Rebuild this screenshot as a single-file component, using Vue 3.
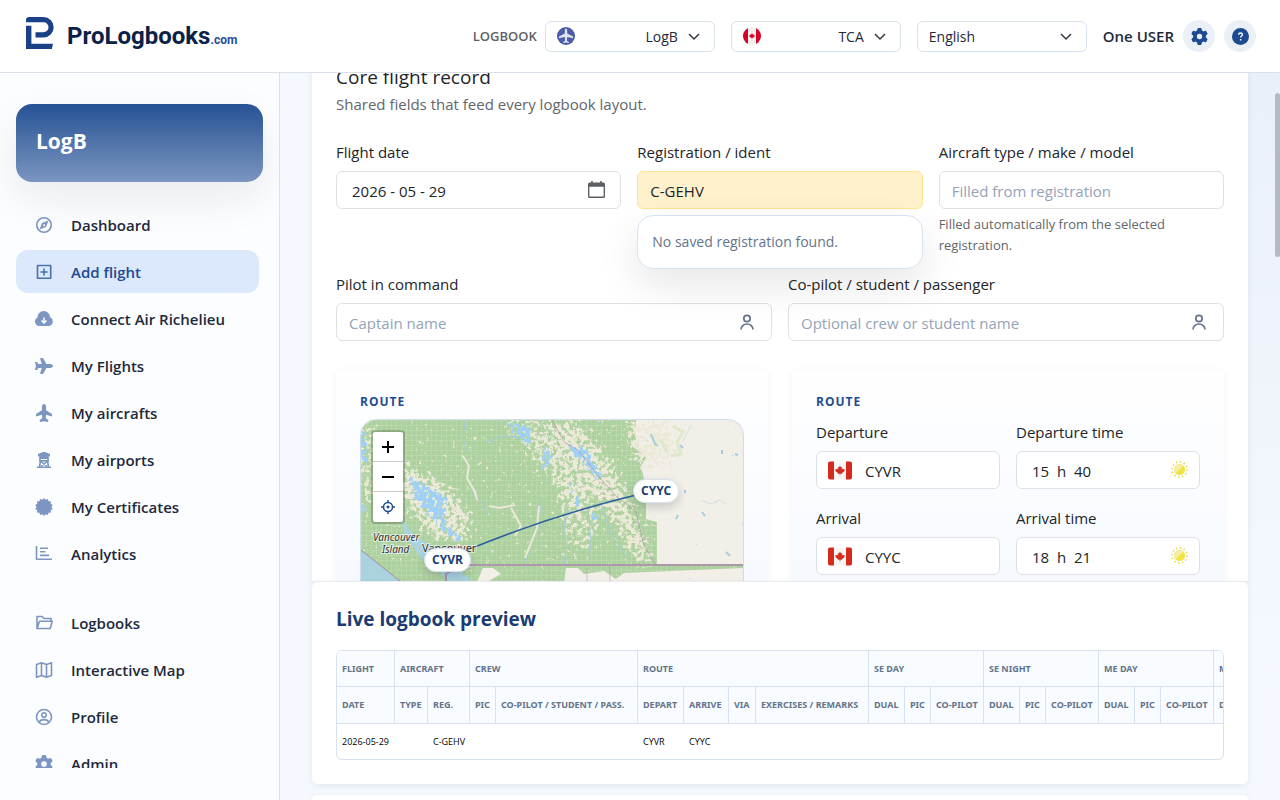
<template>
  <div class="shell">
    <header class="topbar">
      <a class="brand" href="#">
        <svg class="brand-mark" viewBox="0 0 28 33" aria-hidden="true">
          <path d="M0 3.200A3.200 3.200 0 0 1 3.200 0H17.500A10.200 10.200 0 0 1 17.500 20.400H9.500V15.200H17.500A5 5 0 0 0 17.500 5.200H0ZM0 8.800H5.400V26.800H27L25.800 32H0Z" />
        </svg>
        <span class="brand-name">ProLogbooks<small>.com</small></span>
      </a>
      <div class="top-tools">
        <div class="pick">
          <label class="pick-label" for="logbook">LOGBOOK</label>
          <div class="select-box">
            <svg class="pick-icon" viewBox="0 0 18 18" aria-hidden="true">
              <circle cx="9" cy="9" r="9" fill="#4c5ca9" />
              <path d="M9 1.500c.8 0 1.200 1.200 1.200 2.400v2.700l5.800 3v1.600l-5.800-1.100-.3 3.600 2 1.300v1L9 15.500 6.100 16v-1l2-1.300-.3-3.600L2 11.200V9.600l5.800-3V3.900c0-1.200.4-2.400 1.200-2.400Z" fill="#dfe3ee" />
            </svg>
            <select id="logbook" v-model="logbook" class="right">
              <option>LogB</option>
            </select>
            <svg class="chevron" viewBox="0 0 12 8" aria-hidden="true"><path d="M1 1l5 5 5-5" /></svg>
          </div>
        </div>
        <div class="select-box">
          <svg class="pick-icon" viewBox="0 0 18 18" aria-hidden="true">
            <defs><clipPath id="round"><circle cx="9" cy="9" r="9" /></clipPath></defs>
            <g clip-path="url(#round)">
              <path d="M0 0h18v18H0z" fill="#f0f0f0" />
              <path d="M0 0h5v18H0zM13 0h5v18h-5z" fill="#d80027" />
              <path :d="leaf" transform="translate(9 9) scale(.6)" fill="#d80027" />
            </g>
          </svg>
          <select v-model="authority" class="right" aria-label="Authority">
            <option>TCA</option>
          </select>
          <svg class="chevron" viewBox="0 0 12 8" aria-hidden="true"><path d="M1 1l5 5 5-5" /></svg>
        </div>
        <div class="select-box">
          <select v-model="language" aria-label="Language">
            <option>English</option>
            <option>Français</option>
          </select>
          <svg class="chevron" viewBox="0 0 12 8" aria-hidden="true"><path d="M1 1l5 5 5-5" /></svg>
        </div>
        <div class="user">
          <span class="user-name">One USER</span>
          <button class="round-btn" aria-label="Settings">
            <svg viewBox="0 0 512 512"><path :d="gear" /></svg>
          </button>
          <button class="round-btn" aria-label="Help">
            <svg viewBox="0 0 16 16">
              <circle cx="8" cy="8" r="8" />
              <path d="M6.200 6.400C6.300 5.300 7 4.700 8 4.700s1.800.6 1.800 1.500c0 1.300-1.700 1.300-1.700 2.700M8.100 10.400v1.400" class="mark" />
            </svg>
          </button>
        </div>
      </div>
    </header>

    <aside class="sidebar">
      <div class="book-card">LogB</div>
      <nav class="nav">
        <ul v-for="(group, g) in navGroups" :key="g">
          <li v-for="item in group" :key="item.label">
            <a href="#" class="nav-link" :class="{ active: item.label === current }" @click.prevent="current = item.label">
              <svg :viewBox="item.box || '0 0 18 18'" aria-hidden="true">
                <path v-if="item.fill" :d="item.fill" class="solid" />
                <path v-if="item.line" :d="item.line" class="line" />
                <path v-if="item.cut" :d="item.cut" class="cut" />
              </svg>
              <span>{{ item.label }}</span>
            </a>
          </li>
        </ul>
      </nav>
    </aside>

    <main class="main">
      <section class="card form-card">
        <h2>Core flight record</h2>
        <p class="lead">Shared fields that feed every logbook layout.</p>

        <div class="row three">
          <div class="field">
            <label for="date">Flight date</label>
            <div class="control">
              <input id="date" v-model="flight.date" class="segmented" />
              <svg class="date-icon" viewBox="0 0 16 16" aria-hidden="true">
                <path d="M3 0h1.500v1.500h7V0H13v1.500h1.500A1.500 1.500 0 0 1 16 3v11.500a1.500 1.500 0 0 1-1.500 1.500h-13A1.500 1.500 0 0 1 0 14.500V3a1.500 1.500 0 0 1 1.500-1.500H3ZM1.300 5.500v9.200h13.400V5.500Z" fill-rule="evenodd" />
              </svg>
            </div>
          </div>
          <div class="field">
            <label for="ident">Registration / ident</label>
            <div class="control">
              <input id="ident" v-model="flight.ident" class="highlight" />
              <div class="suggest">No saved registration found.</div>
            </div>
          </div>
          <div class="field">
            <label for="type">Aircraft type / make / model</label>
            <input id="type" placeholder="Filled from registration" />
            <p class="hint">Filled automatically from the selected registration.</p>
          </div>
        </div>

        <div class="row two">
          <div v-for="person in crew" :key="person.id" class="field">
            <label :for="person.id">{{ person.label }}</label>
            <div class="control">
              <input :id="person.id" :placeholder="person.hint" />
              <svg class="person" viewBox="0 0 18 18" aria-hidden="true">
                <circle cx="9" cy="5.500" r="3.200" />
                <path d="M3 16.500a6 5.500 0 0 1 12 0" />
              </svg>
            </div>
          </div>
        </div>

        <div class="row panels">
          <section class="panel">
            <h3>ROUTE</h3>
            <div class="map">
              <svg class="map-art" viewBox="0 0 382 320" preserveAspectRatio="xMinYMin slice" aria-hidden="true">
                <defs>
                  <filter id="clearing" x="0" y="0" width="100%" height="100%" filterUnits="userSpaceOnUse">
                    <feTurbulence type="fractalNoise" baseFrequency=".24" numOctaves="4" seed="8" result="noise" />
                    <feGaussianBlur in="SourceAlpha" stdDeviation="6" result="soft" />
                    <feComposite in="soft" in2="noise" operator="arithmetic" k2=".5" k3="1" k4="-.74" />
                    <feComponentTransfer result="shape"><feFuncA type="linear" slope="8" /></feComponentTransfer>
                    <feFlood flood-color="#ece9d8" />
                    <feComposite in2="shape" operator="in" />
                  </filter>
                  <filter id="water" x="0" y="0" width="100%" height="100%" filterUnits="userSpaceOnUse">
                    <feTurbulence type="fractalNoise" baseFrequency=".26" numOctaves="2" seed="21" result="noise" />
                    <feGaussianBlur in="SourceAlpha" stdDeviation="2" result="soft" />
                    <feComposite in="soft" in2="noise" operator="arithmetic" k2=".5" k3="1" k4="-.82" />
                    <feComponentTransfer result="shape"><feFuncA type="linear" slope="12" /></feComponentTransfer>
                    <feFlood flood-color="#9fd0f5" />
                    <feComposite in2="shape" operator="in" />
                  </filter>
                  <pattern id="grid" width="5" height="5" patternUnits="userSpaceOnUse">
                    <path d="M0 .5h5M.5 0v5" stroke="#c6dfb9" stroke-opacity=".4" />
                  </pattern>
                </defs>
                <path d="M0 0h382v320H0z" fill="#add19e" />
                <path d="M0 0h382v320H0z" fill="url(#grid)" />
                <g filter="url(#clearing)">
                  <path d="M140 0h35l30 40 20 40-14 4-40-50z" fill-opacity=".6" />
                  <path d="M180 0h36l36 45 30 70 12 30h-16l-32-52-40-50z" fill-opacity=".72" />
                  <path d="M40 42l45 22 26 32-8 30-36-12-30-40z" fill-opacity=".75" />
                  <path d="M0 0h14v80H0z" fill-opacity=".6" />
                  <path d="M195 60l30 6 16 40-20 30-20-20z" fill-opacity=".5" />
                  <path d="M0 0h382v146H0z" fill-opacity=".1" />
                </g>
                <path d="M275 0h107v144h-86v-42l-11-3v-31l-5-22 5-8-7-10-4-12z" fill="#f2efe9" />
                <g filter="url(#clearing)">
                  <path d="M262 0h46l14 35-36 18-14-8z" fill-opacity=".7" />
                </g>
                <path d="M312 6l10 6-6 10 4 12-10 2M300 20l6 12" fill="none" stroke="#dfe8c8" stroke-width="3" />
                <path d="M205 148h12l6 6 20-3 12 8 8-6 119-5v172H190l12-150zM122 148h10l8 6-14 8h-10z" fill="#f2efe9" />
                <g filter="url(#water)">
                  <path d="M46 55l18 10 22 10-2 28-16-6-14-16zM0 12h6v32H0zM78 92l8 12 16 14-4 6-22-18zM145 0l26 8 2 20-18-10zM183 20l8 14-4 20-6-8zM202 26h24l8 18 10 14-8 2-16-18zM205 50l10 22 6 18-8-4zM228 88l10 8-4 14z" fill-opacity=".95" />
                </g>
                <path d="M290 14l4 10 3 2M319 25l3 3M361 30v4M374 34l3 1M341 92l3 4M365 132l4 4M324 70v3M317 95l-2 4" fill="none" stroke="#a5cddd" stroke-width="2" />
                <path d="M340 80l10 4 8-4 8 4M330 5l-8 16" fill="none" stroke="#cfe0e0" />
                <g fill="none" stroke="#a5cddd">
                  <path d="M104 0l-2 18 4 14M125 22l20-6 12 2M163 148l6-22 8-18 4-30M203 146l2-20-2-24 5-12M228 100l2 22-2 18M267 138l-16-22-12-34M110 70l12 14 4 10" />
                </g>
                <g fill="none" stroke="#ece9d8" stroke-width="2">
                  <path d="M102 36l6 10-2 12 8 14 2 8M128 86l10 2 16-3M150 88l10 18-6 10M178 86l-2 22-12 30" />
                </g>
                <path d="M40 98l10 14 14 10 20 14 20 10-5 12H86L60 138 44 116z" fill="#aad3df" />
                <path d="M0 82l6 8-6 4zM0 130l20 16 20 16 8 158H0z" fill="#aad3df" />
                <path d="M84 150l14 2 10 6 2 162H80z" fill="#aad3df" />
                <path d="M78 140l30-2 6 8-18 6-16-2z" fill="#d8d6ce" />
                <g fill="none" stroke="#a98bab">
                  <path d="M0 130l20 16 20 16" />
                  <path d="M191 0l12 22 14 8 22 28 16 18 20 16 8 34 12 19" stroke-opacity=".6" />
                  <path d="M104 145h278M85 162v-8l8-5" stroke-width="2" stroke-opacity=".8" />
                  <path d="M226 146v174M249 146v174" stroke-opacity=".5" />
                </g>
                <path d="M104 131Q185 97 275 75" fill="none" stroke="#2f5e9f" stroke-width="1.600" />
                <g class="place">
                  <text x="12" y="121" class="island">Vancouver</text>
                  <text x="21" y="133" class="island">Island</text>
                  <text x="61" y="132">Vancouver</text>
                </g>
              </svg>
              <div class="zoom">
                <button aria-label="Zoom in"><svg viewBox="0 0 14 14"><path d="M7 1v12M1 7h12" /></svg></button>
                <button aria-label="Zoom out"><svg viewBox="0 0 14 14"><path d="M1 7h12" /></svg></button>
                <button aria-label="Centre route" class="locate">
                  <svg viewBox="0 0 14 14"><path d="M7 0v3M7 11v3M0 7h3M11 7h3M11.500 7a4.500 4.500 0 1 1-9 0a4.500 4.500 0 1 1 9 0M7.800 7a.8.8 0 1 1-1.600 0a.8.8 0 1 1 1.600 0" /></svg>
                </button>
              </div>
              <span class="pin from">CYVR</span>
              <span class="pin to">CYYC</span>
            </div>
          </section>

          <section class="panel">
            <h3>ROUTE</h3>
            <div class="legs">
              <template v-for="leg in legs" :key="leg.id">
                <div class="field">
                  <label :for="leg.id">{{ leg.label }}</label>
                  <div class="control">
                    <svg class="flag" viewBox="0 0 24 18" aria-hidden="true">
                      <rect width="24" height="18" rx="2" fill="#f5f5f5" />
                      <path d="M2 0h4v18H2a2 2 0 0 1-2-2V2a2 2 0 0 1 2-2ZM18 0h4a2 2 0 0 1 2 2v14a2 2 0 0 1-2 2h-4Z" fill="#d52b1e" />
                      <path :d="leaf" transform="translate(12 9)" fill="#d52b1e" />
                    </svg>
                    <input :id="leg.id" v-model="leg.airport" class="with-flag" />
                  </div>
                </div>
                <div class="field">
                  <label :for="leg.id + '-time'">{{ leg.label }} time</label>
                  <div class="control">
                    <input :id="leg.id + '-time'" v-model="leg.time" class="segmented" />
                    <svg class="sun" viewBox="0 0 16 16" aria-hidden="true">
                      <circle cx="8" cy="8" r="7.200" class="rays" />
                      <circle cx="8" cy="8" r="5.200" fill="#f0e442" />
                      <path d="M4.300 11.700A5.200 5.200 0 0 1 11.700 4.300Z" fill="#f5eda0" />
                    </svg>
                  </div>
                </div>
              </template>
            </div>
          </section>
        </div>
      </section>

      <section class="card preview">
        <h2>Live logbook preview</h2>
        <div class="table-wrap">
          <table>
            <colgroup>
              <col v-for="(col, i) in columns" :key="i" :style="{ width: col.width + 'px' }" />
            </colgroup>
            <thead>
              <tr>
                <th v-for="group in groups" :key="group.name" :colspan="group.span">{{ group.name }}</th>
              </tr>
              <tr class="sub">
                <th v-for="(col, i) in columns" :key="i">{{ col.name }}</th>
              </tr>
            </thead>
            <tbody>
              <tr>
                <td v-for="(col, i) in columns" :key="i">{{ col.value }}</td>
              </tr>
            </tbody>
          </table>
        </div>
      </section>
      <section class="card next-card"></section>
      <div class="scroll-thumb"></div>
    </main>
  </div>
</template>

<script setup>
import { ref, reactive } from 'vue'

const logbook = ref('LogB')
const authority = ref('TCA')
const language = ref('English')
const current = ref('Add flight')

const flight = reactive({ date: '2026 - 05 - 29', ident: 'C-GEHV' })
const crew = [
  { id: 'pic', label: 'Pilot in command', hint: 'Captain name' },
  { id: 'copilot', label: 'Co-pilot / student / passenger', hint: 'Optional crew or student name' }
]
const legs = reactive([
  { id: 'departure', label: 'Departure', airport: 'CYVR', time: '15  h  40' },
  { id: 'arrival', label: 'Arrival', airport: 'CYYC', time: '18  h  21' }
])

const leaf = 'M0-5l1 2 1.200-.6-.5 2.800 1.200-1.200.3.800 1.600-.2-.6 1.500.6.400-2.800 2.100.3.900L.3 3.100V5h-.6V3.100l-2 .4.300-.9-2.800-2.100.6-.4-.6-1.500 1.600.2.300-.8 1.200 1.200-.5-2.800L-1-3Z'
const gear = 'M495.9 166.6c3.2 8.7 .5 18.4-6.4 24.6l-43.3 39.4c1.1 8.3 1.7 16.8 1.7 25.4s-.6 17.1-1.7 25.4l43.3 39.4c6.9 6.2 9.6 15.9 6.4 24.6c-4.4 11.9-9.7 23.3-15.8 34.3l-4.7 8.1c-6.6 11-14 21.4-22.1 31.2c-5.9 7.2-15.7 9.6-24.5 6.8l-55.7-17.7c-13.4 10.3-28.2 18.9-44 25.4l-12.5 57.1c-2 9.1-9 16.3-18.2 17.8c-13.8 2.3-28 3.5-42.5 3.5s-28.7-1.2-42.5-3.5c-9.2-1.5-16.2-8.7-18.2-17.8l-12.5-57.1c-15.8-6.5-30.6-15.1-44-25.4L83.1 425.9c-8.8 2.8-18.6 .3-24.5-6.8c-8.1-9.8-15.5-20.2-22.1-31.2l-4.7-8.1c-6.1-11-11.4-22.4-15.8-34.3c-3.2-8.7-.5-18.4 6.400-24.6l43.3-39.4C64.6 273.1 64 264.6 64 256s.6-17.1 1.7-25.4L22.4 191.2c-6.9-6.2-9.6-15.9-6.4-24.6c4.4-11.9 9.7-23.3 15.8-34.3l4.7-8.1c6.6-11 14-21.4 22.1-31.2c5.9-7.2 15.7-9.6 24.5-6.8l55.7 17.7c13.4-10.3 28.2-18.9 44-25.4l12.5-57.1c2-9.1 9-16.3 18.2-17.8C227.3 1.2 241.5 0 256 0s28.7 1.2 42.5 3.5c9.2 1.5 16.2 8.700 18.2 17.8l12.5 57.1c15.8 6.5 30.6 15.1 44 25.4l55.7-17.7c8.8-2.8 18.6-.3 24.5 6.8c8.1 9.8 15.5 20.2 22.1 31.2l4.7 8.1c6.1 11 11.4 22.4 15.8 34.3zM256 336a80 80 0 1 0 0-160 80 80 0 1 0 0 160z'
const plane = 'M482.3 192c34.2 0 93.7 29 93.7 64c0 36-59.5 64-93.7 64l-116.6 0L265.2 495.9c-5.7 10-16.3 16.1-27.8 16.1l-56.2 0c-10.6 0-18.3-10.2-15.4-20.4l49-171.6L112 320 68.800 377.600c-3 4-7.800 6.400-12.800 6.400l-42 0c-7.800 0-14-6.300-14-14c0-1.300 .2-2.600 .5-3.900L32 256 .5 145.900c-.4-1.300-.5-2.600-.5-3.900c0-7.800 6.300-14 14-14l42 0c5 0 9.800 2.400 12.800 6.400L112 192l102.900 0-49-171.600C162.900 10.200 170.600 0 181.200 0l56.200 0c11.500 0 22.100 6.200 27.800 16.100L365.700 192l116.600 0z'

// toothed badge outline, 14 points
const badge = (() => {
  const points = []
  for (let i = 0; i < 28; i++) {
    const r = i % 2 ? 7.4 : 9
    const a = (i / 28) * Math.PI * 2
    points.push((9 + r * Math.sin(a)).toFixed(2) + ' ' + (9 - r * Math.cos(a)).toFixed(2))
  }
  return 'M' + points.join('L') + 'Z'
})()

const navGroups = [
  [
    { label: 'Dashboard', line: 'M16.300 9a7.300 7.300 0 1 1-14.600 0a7.300 7.300 0 1 1 14.600 0', fill: 'M13.500 4.500l-2.500 6.500L4.500 13.500l2.500-6.500ZM9.900 8.500a1 1 0 1 0-1.500 1.400A1 1 0 0 0 9.900 8.500Z' },
    { label: 'Add flight', line: 'M2.500 2.500h13.200v12.800h-13.200zM9.100 5.500v7M5.500 9h7.200' },
    { label: 'Connect Air Richelieu', fill: 'M4.500 16A4.500 4.500 0 0 1 2.500 7.500a6.200 6.200 0 0 1 12.500-.4A4.700 4.700 0 0 1 14 16Z', cut: 'M9 7.500v5M6.500 10.500L9 13l2.500-2.500' },
    { label: 'My Flights', box: '0 0 576 512', fill: plane },
    { label: 'My aircrafts', fill: 'M9 0c1.200 0 2.100 1.800 2.100 3v3.300L17 10.100v2.300l-5.900-1.700-.4 3.600 2.500 1.800V18L9 17.200 4.800 18v-1.900l2.500-1.800-.4-3.600L1 12.400v-2.300l5.900-3.800V3C6.900 1.800 7.800 0 9 0Z' },
    { label: 'My airports', line: 'M5 6v4M13 6v4M5.500 10L4.500 16M12.500 10l1 6M6 10.500l6 5M12 10.500l-6 5', fill: 'M8 1h2l5 2v2.500h-1.500L13 8H5l-.5-2.500H3V3ZM4 9h10v1.700H4ZM2 15.500h14V17H2Z' },
    { label: 'My Certificates', fill: badge },
    { label: 'Analytics', line: 'M1.500 1v13.200h15.500M5 3.200h8M5 6.800h5.500M5 10.400h9' }
  ],
  [
    { label: 'Logbooks', line: 'M2 14.500V2.500h5l2 2h7V7M4.500 7.300h12.700l-2 7.200H2Z' },
    { label: 'Interactive Map', line: 'M1.500 3.500L6.500 1.800l5 1.700 5-1.700v12.700l-5 1.700-5-1.700-5 1.700ZM6.500 1.800v12.700M11.500 3.500v12.700' },
    { label: 'Profile', line: 'M16.500 9a7.500 7.500 0 1 1-15 0a7.500 7.500 0 1 1 15 0M11.300 7a2.300 2.300 0 1 1-4.600 0a2.300 2.300 0 1 1 4.600 0M4.300 14.200c1.200-3.400 8.200-3.400 9.400 0' },
    { label: 'Admin', box: '0 0 512 512', fill: gear }
  ]
]

const groups = [
  { name: 'FLIGHT', span: 1 },
  { name: 'AIRCRAFT', span: 2 },
  { name: 'CREW', span: 2 },
  { name: 'ROUTE', span: 4 },
  { name: 'SE DAY', span: 3 },
  { name: 'SE NIGHT', span: 3 },
  { name: 'ME DAY', span: 3 },
  { name: 'ME NIGHT', span: 3 }
]
const hours = () => [
  { name: 'DUAL', width: 36 },
  { name: 'PIC', width: 26 },
  { name: 'CO-PILOT', width: 53 }
]
const columns = [
  { name: 'DATE', width: 58, value: '2026-05-29' },
  { name: 'TYPE', width: 33 },
  { name: 'REG.', width: 42, value: 'C-GEHV' },
  { name: 'PIC', width: 26 },
  { name: 'CO-PILOT / STUDENT / PASS.', width: 142 },
  { name: 'DEPART', width: 46, value: 'CYVR' },
  { name: 'ARRIVE', width: 45, value: 'CYYC' },
  { name: 'VIA', width: 27 },
  { name: 'EXERCISES / REMARKS', width: 113 },
  ...hours(),
  ...hours(),
  ...hours(),
  ...hours()
]
</script>

<style>
body {
  margin: 0;
}
</style>

<style scoped>
* {
  box-sizing: border-box;
}
.shell {
  display: grid;
  grid-template: 73px minmax(0, 1fr) / 280px minmax(0, 1fr);
  height: 100vh;
  overflow: hidden;
  font-family: "Segoe UI", "Open Sans", "Noto Sans", sans-serif;
  font-size: 15px;
  line-height: 24px;
  color: #212529;
  background: #f5f9ff;
}
h2,
h3,
p,
ul {
  margin: 0;
  padding: 0;
}
button,
input,
select {
  font: inherit;
  color: inherit;
}
button {
  padding: 0;
  border: 0;
  cursor: pointer;
}

/* top bar */
.topbar {
  grid-column: 1 / 3;
  display: flex;
  align-items: center;
  justify-content: space-between;
  padding: 0 24px 0 26px;
  background: #fff;
  border-bottom: 1px solid #d9e0ea;
}
.brand {
  display: flex;
  align-items: center;
  gap: 13px;
  text-decoration: none;
  color: #0c2148;
}
.brand-mark {
  width: 28px;
  height: 33px;
  margin-bottom: 6px;
  fill: #1a4186;
}
.brand-name {
  padding-top: 4px;
  font-family: "Roboto", sans-serif;
  font-size: 24px;
  font-weight: 700;
  line-height: 32px;
}
.brand-name small {
  font-size: 12px;
  color: #27509a;
}
.top-tools {
  display: flex;
  align-items: center;
  gap: 16px;
}
.pick {
  display: flex;
  align-items: center;
  gap: 8px;
}
.pick-label {
  font-weight: 600;
  font-size: 13px;
  color: #5d6167;
}
.select-box {
  position: relative;
  width: 170px;
}
.select-box select {
  display: block;
  width: 100%;
  height: 31px;
  padding: 1px 36px 0 11px;
  appearance: none;
  background: #fff;
  border: 1px solid #d7e1ef;
  border-radius: 6px;
  font-size: 14px;
  color: #1e293b;
}
.select-box .right {
  text-align-last: right;
}
.pick-icon {
  position: absolute;
  top: 6px;
  left: 12px;
  width: 18px;
  height: 18px;
}
.chevron {
  position: absolute;
  top: 12px;
  right: 15px;
  width: 12px;
  height: 8px;
  fill: none;
  stroke: #343a40;
  stroke-width: 1.5;
  pointer-events: none;
}
.user {
  display: flex;
  align-items: center;
  gap: 9px;
}
.user-name {
  font-weight: 600;
  color: #1e293b;
}
.round-btn {
  display: grid;
  place-items: center;
  width: 32px;
  height: 32px;
  border-radius: 50%;
  background: #ebf0f6;
}
.round-btn svg {
  width: 17px;
  height: 17px;
  fill: #1d4b91;
}
.mark {
  fill: none;
  stroke: #fff;
  stroke-width: 1.3;
}

/* sidebar */
.sidebar {
  display: flex;
  flex-direction: column;
  padding: 31px 16px 32px;
  min-height: 0;
  background: #fcfdff;
  border-right: 1px solid #d7e1ef;
}
.book-card {
  flex: none;
  padding: 21px 20px 25px;
  border-radius: 16px;
  background: linear-gradient(#265294, #7b95bf);
  box-shadow: 0 16px 40px rgba(15, 23, 42, 0.08);
  color: #fff;
  font-size: 21px;
  font-weight: 700;
  line-height: 32px;
}
.nav {
  display: flex;
  flex-direction: column;
  gap: 26px;
  min-height: 0;
  padding-top: 21px;
  overflow: hidden;
}
.nav ul {
  display: flex;
  flex-direction: column;
  gap: 4px;
  list-style: none;
}
.nav-link {
  display: flex;
  align-items: center;
  gap: 18px;
  height: 43px;
  margin-right: 4px;
  padding: 0 19px;
  border-radius: 12px;
  font-weight: 600;
  color: #1e293b;
  text-decoration: none;
}
.nav-link svg {
  width: 18px;
  height: 18px;
  color: #7c96c1;
}
.nav-link.active {
  background: #dce8fc;
  color: #1d4b91;
}
.nav-link.active svg {
  color: #4a70ab;
}
.solid {
  fill: currentColor;
  fill-rule: evenodd;
}
.line {
  fill: none;
  stroke: currentColor;
  stroke-width: 1.6;
  stroke-linejoin: round;
}
.cut {
  fill: none;
  stroke: #fff;
  stroke-width: 1.5;
}

/* main column */
.main {
  position: relative;
  display: flex;
  flex-direction: column;
  padding: 0 32px;
  overflow: hidden;
  background: radial-gradient(at 100% 0, #eaf0f9, #f5f9ff 60%);
}
.card {
  border-radius: 6px;
  background: #fff;
  box-shadow: 0 2px 6px rgba(15, 23, 42, 0.08);
}
.form-card {
  flex: 1;
  min-height: 0;
  margin-top: -32px;
  padding: 24px 24px 0;
  border-radius: 0;
  overflow: hidden;
}
.form-card h2 {
  margin-bottom: 3px;
  font-size: 19px;
  font-weight: 400;
  line-height: 24px;
}
.lead {
  margin-bottom: 24px;
  color: #62666b;
}
.row {
  display: grid;
  gap: 16px;
}
.three {
  grid-template-columns: repeat(3, minmax(0, 1fr));
  margin-bottom: 16px;
}
.two {
  grid-template-columns: repeat(2, minmax(0, 1fr));
  margin-bottom: 28px;
}
.panels {
  grid-template-columns: repeat(2, minmax(0, 1fr));
  gap: 24px;
}
.field label {
  display: block;
  margin-bottom: 7px;
}
.control {
  position: relative;
}
.field input {
  display: block;
  width: 100%;
  height: 38px;
  padding: 2px 12px 0;
  background: #fff;
  border: 1px solid #dee2e6;
  border-radius: 6px;
}
.field input::placeholder {
  color: #94a3b8;
}
.field .segmented {
  padding-left: 15px;
}
.field .highlight {
  background: #fff1cc;
  border-color: #ffe58f;
}
.field .with-flag {
  padding-left: 48px;
}
.date-icon,
.person,
.sun {
  position: absolute;
  right: 16px;
  top: 10px;
  width: 17px;
  height: 17px;
  fill: #5c5f63;
}
.person {
  width: 18px;
  height: 18px;
  fill: none;
  stroke: #64748b;
  stroke-width: 1.7;
}
.sun {
  right: 12px;
}
.rays {
  fill: none;
  stroke: #e3d94a;
  stroke-width: 1.5;
  stroke-dasharray: 1.4 2.37;
}
.flag {
  position: absolute;
  left: 12px;
  top: 10px;
  width: 24px;
  height: 19px;
}
.hint {
  margin-top: 5px;
  font-size: 13px;
  line-height: 21px;
  color: #62666b;
}
.suggest {
  position: absolute;
  z-index: 2;
  top: 44px;
  left: 0;
  right: 0;
  padding: 14px;
  border: 1px solid #d7e3f3;
  border-radius: 16px;
  background: #fff;
  box-shadow: 0 16px 40px rgba(15, 23, 42, 0.1);
  font-size: 14px;
  line-height: 24px;
  color: #64748b;
}
.panel {
  padding: 24px;
  border-radius: 6px;
  background: linear-gradient(#fff, #f5f9ff 230px);
  box-shadow: 0 2px 6px rgba(15, 23, 42, 0.06);
}
.panel h3 {
  margin-bottom: 8px;
  font-size: 12px;
  line-height: 18px;
  letter-spacing: 1px;
  color: #1d4b91;
}
.legs {
  display: grid;
  grid-template-columns: repeat(2, minmax(0, 1fr));
  gap: 17px 16px;
  padding-top: 1px;
}

/* route map */
.map {
  position: relative;
  height: 320px;
  border: 1px solid #cfdcec;
  border-radius: 16px;
  overflow: hidden;
}
.map-art {
  display: block;
  width: 100%;
  height: 100%;
}
.place text {
  font-family: "Noto Sans", sans-serif;
  font-size: 11px;
  fill: #333;
  stroke: #fff;
  stroke-width: 2;
  stroke-opacity: 0.6;
  paint-order: stroke;
}
.place .island {
  font-size: 10px;
  font-style: italic;
}
.zoom {
  position: absolute;
  top: 10px;
  left: 10px;
  border: 2px solid rgba(0, 0, 0, 0.2);
  border-radius: 4px;
  background: #fff;
  background-clip: padding-box;
}
.zoom button {
  display: grid;
  place-items: center;
  width: 30px;
  height: 30px;
  background: none;
  border-bottom: 1px solid #ccc;
}
.zoom .locate {
  border-bottom: 0;
}
.zoom svg {
  width: 14px;
  height: 14px;
  fill: none;
  stroke: #000;
  stroke-width: 2;
}
.zoom .locate svg {
  stroke: #1d4b91;
  stroke-width: 1.5;
}
.pin {
  position: absolute;
  padding: 0 7px;
  border: 1px solid #d7e1ef;
  border-radius: 12px;
  background: rgba(255, 255, 255, 0.95);
  box-shadow: 0 4px 10px rgba(15, 23, 42, 0.18);
  font-size: 12px;
  font-weight: 700;
  line-height: 22px;
  color: #1a3c72;
}
.from {
  left: 63px;
  top: 128px;
}
.to {
  left: 272px;
  top: 59px;
}

/* preview table */
.preview {
  position: relative;
  z-index: 3;
  margin-bottom: 11px;
  padding: 24px;
  border-top: 1px solid #e9edf1;
}
.preview h2 {
  margin-bottom: 17px;
  font-size: 19px;
  font-weight: 700;
  line-height: 27px;
  color: #1a3c72;
}
.table-wrap {
  border: 1px solid #d7e1ef;
  border-radius: 6px;
  overflow: hidden;
}
table {
  width: 0;
  table-layout: fixed;
  border-collapse: separate;
  border-spacing: 0;
  font-size: 9px;
  line-height: 12px;
}
th,
td {
  height: 36px;
  padding: 0 0 0 5px;
  text-align: left;
  white-space: nowrap;
}
th {
  background: #f8fbff;
  border-right: 1px solid #d7e1ef;
  border-bottom: 1px solid #d7e1ef;
  font-family: "Noto Sans", sans-serif;
  font-weight: 700;
  color: #64748b;
}
.sub th {
  height: 37px;
}
td {
  height: 35px;
  color: #000;
}
.next-card {
  flex: none;
  height: 5px;
  border-radius: 6px 6px 0 0;
}
.scroll-thumb {
  position: absolute;
  top: 20px;
  right: 0;
  width: 5px;
  height: 164px;
  border-radius: 3px;
  background: #b4b9c2;
}
</style>
